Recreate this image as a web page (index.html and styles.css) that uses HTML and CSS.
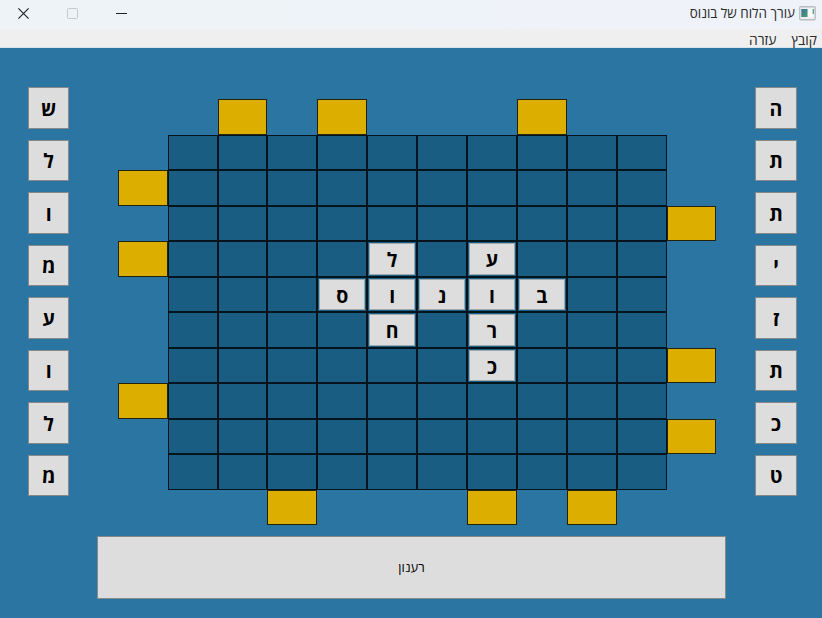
FILE: index.html
```html
<!DOCTYPE html>
<html lang="he" dir="rtl">
<head>
<meta charset="utf-8">
<title>עורך הלוח של בונוס</title>
<link rel="stylesheet" href="styles.css">
</head>
<body>
<header class="titlebar">
  <svg class="app-icon" width="17" height="15" viewBox="0 0 17 15">
    <defs><linearGradient id="g" x1="0" y1="0" x2="1" y2="1"><stop offset="0" stop-color="#3f6f9c"/><stop offset="1" stop-color="#46a06c"/></linearGradient></defs>
    <rect x=".75" y=".75" width="15.5" height="13" rx="1" fill="#eef0f1" stroke="#b8bdc1" stroke-width="1.3"/>
    <rect x="2.3" y="3" width="6.2" height="8" fill="url(#g)"/>
    <rect x="9.5" y="3" width="4" height="8" fill="#fafafa"/>
    <path d="M14.3 3v5" stroke="#4b9580" stroke-width="1.2"/>
  </svg>
  <h1 class="title">עורך הלוח של בונוס</h1>
  <div class="controls">
    <svg width="11" height="11" viewBox="0 0 11 11"><path d="M0 5.5h11" stroke="#222"/></svg>
    <svg width="11" height="11" viewBox="0 0 11 11"><rect x=".5" y=".5" width="10" height="10" rx=".8" fill="none" stroke="#c6cacd"/></svg>
    <svg width="11" height="11" viewBox="0 0 11 11"><path d="M.4.4l10.2 10.2M10.6.4L.4 10.6" stroke="#222" stroke-width="1.15"/></svg>
  </div>
</header>
<nav class="menubar"><span>קובץ</span><span>עזרה</span></nav>
<main class="workspace">
  <div class="play">
    <aside class="rack">
      <button class="tile">ה</button><button class="tile">ת</button><button class="tile">ת</button><button class="tile">י</button><button class="tile">ז</button><button class="tile">ת</button><button class="tile">כ</button><button class="tile">ט</button>
    </aside>
    <div class="board" id="board"></div>
    <aside class="rack">
      <button class="tile">ש</button><button class="tile">ל</button><button class="tile">ו</button><button class="tile">מ</button><button class="tile">ע</button><button class="tile">ו</button><button class="tile">ל</button><button class="tile">מ</button>
    </aside>
  </div>
  <button class="refresh">רענון</button>
</main>
<script src="board.js"></script>
</body>
</html>
```
FILE: styles.css
```css
* { box-sizing: border-box; }
body {
  margin: 0;
  width: 822px;
  height: 618px;
  overflow: hidden;
  display: flex;
  flex-direction: column;
  background: #2b75a3;
  font-family: "Open Sans", "Noto Sans", sans-serif;
  color: #2a2a2a;
}
button { font-family: inherit; margin: 0; padding: 0; color: #000; }
.titlebar {
  height: 29px;
  flex: none;
  display: flex;
  align-items: center;
  padding: 0 6px 3px 18px;
  background: linear-gradient(to right, #edf3f7, #eff2f9);
}
.app-icon { margin-left: 4px; }
.title { margin: 0; font-size: 13.4px; font-weight: 400; line-height: 18px; }
.controls { display: flex; gap: 38px; margin-right: auto; }
.menubar {
  height: 19px;
  flex: none;
  display: flex;
  gap: 15px;
  padding: 0 5px;
  background: #efefef;
  border-bottom: 1px solid #d9e4ea;
  font-size: 13.8px;
  line-height: 21px;
}
.workspace {
  flex: 1;
  display: flex;
  flex-direction: column;
  align-items: center;
  padding: 39.3px 0 0;
}
.play {
  width: 100%;
  display: flex;
  padding-right: 25.3px;
}
.rack { display: flex; flex-direction: column; gap: 11.2px; }
.tile {
  width: 41.4px;
  height: 41.3px;
  display: flex;
  align-items: center;
  justify-content: center;
  background: #ddd;
  border: 1px solid #84898c;
  font-size: 19.5px;
  font-weight: 700;
  line-height: 26px;
  padding-top: 2px;
}
.board {
  direction: ltr;
  display: grid;
  grid-template-columns: repeat(12, 49.9px);
  grid-template-rows: repeat(12, 35.52px);
  margin: 11.9px 38.9px 0 48.4px;
}
.cell { border: 1px solid #03141d; background: #195e82; padding: 1px; }
.cell.blank { visibility: hidden; }
.cell.bonus { background: #dbae00; border-color: #24220c; }
.cell .tile { width: 100%; height: 100%; border-color: #9da9ae; padding-top: 2px; }
.refresh {
  width: 629.5px;
  height: 62.5px;
  margin: 10.8px 1px 0 0;
  position: static;
  transform: translateX(1px);
  background: #ddd;
  border: 1px solid #84898c;
  font-size: 13px;
}
```
FILE: board.js
```js
// "#" square, "*" bonus slot, "." empty margin, letters are placed tiles
const layout = [
  "..*.*...*...",
  ".##########.",
  "*##########.",
  ".##########*",
  "*####ל#ע###.",
  ".###סונוב##.",
  ".####ח#ר###.",
  ".######כ###*",
  "*##########.",
  ".##########*",
  ".##########.",
  "...*...*.*.."
];
const board = document.getElementById("board");
for (const row of layout) {
  for (const mark of row) {
    const cell = document.createElement("div");
    cell.className = "cell";
    if (mark === ".") cell.classList.add("blank");
    else if (mark === "*") cell.classList.add("bonus");
    else if (mark !== "#") {
      const tile = document.createElement("button");
      tile.className = "tile";
      tile.textContent = mark;
      cell.append(tile);
    }
    board.append(cell);
  }
}
```
